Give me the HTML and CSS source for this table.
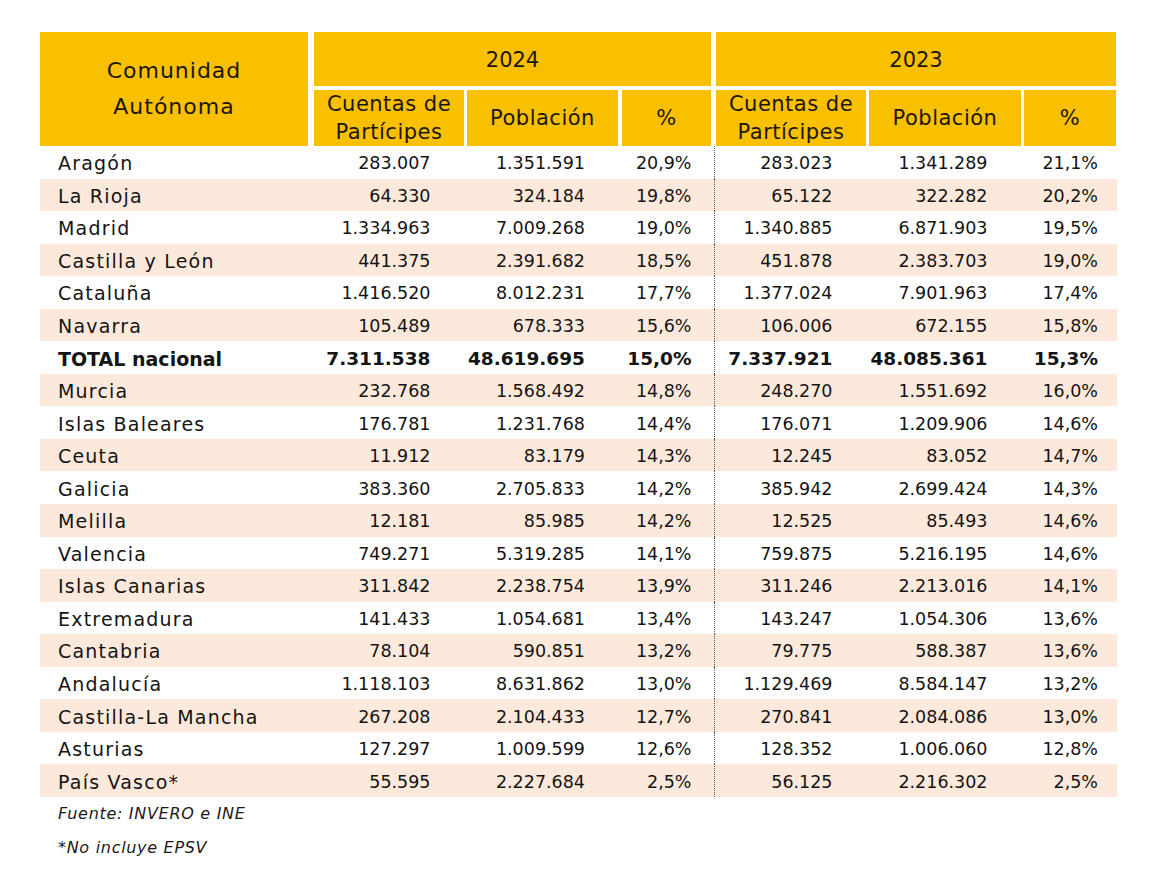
FILE: index.html
```html
<!DOCTYPE html>
<html lang="es">
<head>
<meta charset="utf-8">
<title>Cuentas de partícipes por Comunidad Autónoma</title>
<link rel="stylesheet" href="styles.css">
</head>
<body>
<div class="page">
  <div class="table">
    <div class="head">
      <div class="h h-name"><span>Comunidad<br>Autónoma</span></div>
      <div class="h h-year h-y24">2024</div>
      <div class="h h-year h-y23">2023</div>
      <div class="h h-sub s1">Cuentas de<br>Partícipes</div>
      <div class="h h-sub s2">Población</div>
      <div class="h h-sub s3">%</div>
      <div class="h h-sub s4">Cuentas de<br>Partícipes</div>
      <div class="h h-sub s5">Población</div>
      <div class="h h-sub s6">%</div>
    </div>
    <div class="body">
      <div class="row"><div class="name">Aragón</div><div class="num">283.007</div><div class="num">1.351.591</div><div class="pct a">20,9%</div><div class="num dot">283.023</div><div class="num">1.341.289</div><div class="pct b">21,1%</div></div>
      <div class="row"><div class="name">La Rioja</div><div class="num">64.330</div><div class="num">324.184</div><div class="pct a">19,8%</div><div class="num dot">65.122</div><div class="num">322.282</div><div class="pct b">20,2%</div></div>
      <div class="row"><div class="name">Madrid</div><div class="num">1.334.963</div><div class="num">7.009.268</div><div class="pct a">19,0%</div><div class="num dot">1.340.885</div><div class="num">6.871.903</div><div class="pct b">19,5%</div></div>
      <div class="row"><div class="name">Castilla y León</div><div class="num">441.375</div><div class="num">2.391.682</div><div class="pct a">18,5%</div><div class="num dot">451.878</div><div class="num">2.383.703</div><div class="pct b">19,0%</div></div>
      <div class="row"><div class="name">Cataluña</div><div class="num">1.416.520</div><div class="num">8.012.231</div><div class="pct a">17,7%</div><div class="num dot">1.377.024</div><div class="num">7.901.963</div><div class="pct b">17,4%</div></div>
      <div class="row"><div class="name">Navarra</div><div class="num">105.489</div><div class="num">678.333</div><div class="pct a">15,6%</div><div class="num dot">106.006</div><div class="num">672.155</div><div class="pct b">15,8%</div></div>
      <div class="row total"><div class="name">TOTAL nacional</div><div class="num">7.311.538</div><div class="num">48.619.695</div><div class="pct a">15,0%</div><div class="num dot">7.337.921</div><div class="num">48.085.361</div><div class="pct b">15,3%</div></div>
      <div class="row"><div class="name">Murcia</div><div class="num">232.768</div><div class="num">1.568.492</div><div class="pct a">14,8%</div><div class="num dot">248.270</div><div class="num">1.551.692</div><div class="pct b">16,0%</div></div>
      <div class="row"><div class="name">Islas Baleares</div><div class="num">176.781</div><div class="num">1.231.768</div><div class="pct a">14,4%</div><div class="num dot">176.071</div><div class="num">1.209.906</div><div class="pct b">14,6%</div></div>
      <div class="row"><div class="name">Ceuta</div><div class="num">11.912</div><div class="num">83.179</div><div class="pct a">14,3%</div><div class="num dot">12.245</div><div class="num">83.052</div><div class="pct b">14,7%</div></div>
      <div class="row"><div class="name">Galicia</div><div class="num">383.360</div><div class="num">2.705.833</div><div class="pct a">14,2%</div><div class="num dot">385.942</div><div class="num">2.699.424</div><div class="pct b">14,3%</div></div>
      <div class="row"><div class="name">Melilla</div><div class="num">12.181</div><div class="num">85.985</div><div class="pct a">14,2%</div><div class="num dot">12.525</div><div class="num">85.493</div><div class="pct b">14,6%</div></div>
      <div class="row"><div class="name">Valencia</div><div class="num">749.271</div><div class="num">5.319.285</div><div class="pct a">14,1%</div><div class="num dot">759.875</div><div class="num">5.216.195</div><div class="pct b">14,6%</div></div>
      <div class="row"><div class="name">Islas Canarias</div><div class="num">311.842</div><div class="num">2.238.754</div><div class="pct a">13,9%</div><div class="num dot">311.246</div><div class="num">2.213.016</div><div class="pct b">14,1%</div></div>
      <div class="row"><div class="name">Extremadura</div><div class="num">141.433</div><div class="num">1.054.681</div><div class="pct a">13,4%</div><div class="num dot">143.247</div><div class="num">1.054.306</div><div class="pct b">13,6%</div></div>
      <div class="row"><div class="name">Cantabria</div><div class="num">78.104</div><div class="num">590.851</div><div class="pct a">13,2%</div><div class="num dot">79.775</div><div class="num">588.387</div><div class="pct b">13,6%</div></div>
      <div class="row"><div class="name">Andalucía</div><div class="num">1.118.103</div><div class="num">8.631.862</div><div class="pct a">13,0%</div><div class="num dot">1.129.469</div><div class="num">8.584.147</div><div class="pct b">13,2%</div></div>
      <div class="row"><div class="name">Castilla-La Mancha</div><div class="num">267.208</div><div class="num">2.104.433</div><div class="pct a">12,7%</div><div class="num dot">270.841</div><div class="num">2.084.086</div><div class="pct b">13,0%</div></div>
      <div class="row"><div class="name">Asturias</div><div class="num">127.297</div><div class="num">1.009.599</div><div class="pct a">12,6%</div><div class="num dot">128.352</div><div class="num">1.006.060</div><div class="pct b">12,8%</div></div>
      <div class="row"><div class="name">País Vasco*</div><div class="num">55.595</div><div class="num">2.227.684</div><div class="pct a">2,5%</div><div class="num dot">56.125</div><div class="num">2.216.302</div><div class="pct b">2,5%</div></div>
    </div>
  </div>
  <div class="notes">
    <p class="note">Fuente: INVERO e INE</p>
    <p class="note">*No incluye EPSV</p>
  </div>
</div>
</body>
</html>
```

FILE: styles.css
```css
html, body {
  margin: 0;
  padding: 0;
  background: #ffffff;
}

body {
  font-family: "DejaVu Sans", "Liberation Sans", sans-serif;
  color: #141414;
}

.page {
  padding: 32px 0 0 40px;
}

.table {
  width: 1077px;
}

.head {
  display: grid;
  grid-template-columns: 271px 154.5px 154.5px 93.5px 154px 155px 94.5px;
  grid-template-rows: 58px 56px;
}

.h {
  background: #f9c000;
  color: #1c1608;
  display: flex;
  align-items: center;
  justify-content: center;
  text-align: center;
}

.h-name {
  grid-column: 1;
  grid-row: 1 / span 2;
  margin-right: 3px;
  font-size: 22px;
  letter-spacing: 1px;
  line-height: 36px;
  padding-bottom: 0;
}

.h-year {
  grid-row: 1;
  margin-bottom: 4px;
  font-size: 21px;
  letter-spacing: 0;
  padding-top: 2px;
}

.h-y24 {
  grid-column: 2 / span 3;
  margin-left: 3px;
  margin-right: 2.5px;
}

.h-y23 {
  grid-column: 5 / span 3;
  margin-left: 2.5px;
  margin-right: 1px;
}

.h-sub {
  grid-row: 2;
  font-size: 21px;
  line-height: 28px;
  letter-spacing: 0.5px;
}

.s1 { grid-column: 2; margin-left: 3px; margin-right: 1.5px; }
.s2 { grid-column: 3; margin-left: 1.5px; margin-right: 2px; }
.s3 { grid-column: 4; margin-left: 2px; margin-right: 2.5px; }
.s4 { grid-column: 5; margin-left: 2.5px; margin-right: 1.5px; }
.s5 { grid-column: 6; margin-left: 1.5px; margin-right: 1.5px; }
.s6 { grid-column: 7; margin-left: 1.5px; margin-right: 1px; }

.row {
  display: grid;
  grid-template-columns: 271px 154.5px 154.5px 93.5px 154px 155px 94.5px;
  height: 32.55px;
  align-items: center;
}

.row:nth-child(even) {
  background: #fde9db;
}

.row > div {
  height: 100%;
  display: flex;
  align-items: center;
  padding-top: 2px;
  box-sizing: border-box;
  white-space: nowrap;
}

.name {
  padding-left: 18px;
  font-size: 19px;
  letter-spacing: 1.2px;
}

.num, .pct {
  justify-content: flex-end;
  font-size: 17.5px;
}

.num {
  padding-right: 35px;
}

.pct.a {
  padding-right: 22px;
}

.pct.b {
  padding-right: 19px;
}

.dot {
  border-left: 1px dotted #555555;
}

.total .name {
  font-weight: bold;
  letter-spacing: 0;
}

.total .num, .total .pct {
  font-weight: bold;
  font-size: 18.5px;
}

.notes {
  padding-left: 18px;
}

.note {
  margin: 0;
  font-style: italic;
  font-size: 16px;
  line-height: 34px;
  letter-spacing: 0.7px;
  color: #1a1a1a;
}
```
